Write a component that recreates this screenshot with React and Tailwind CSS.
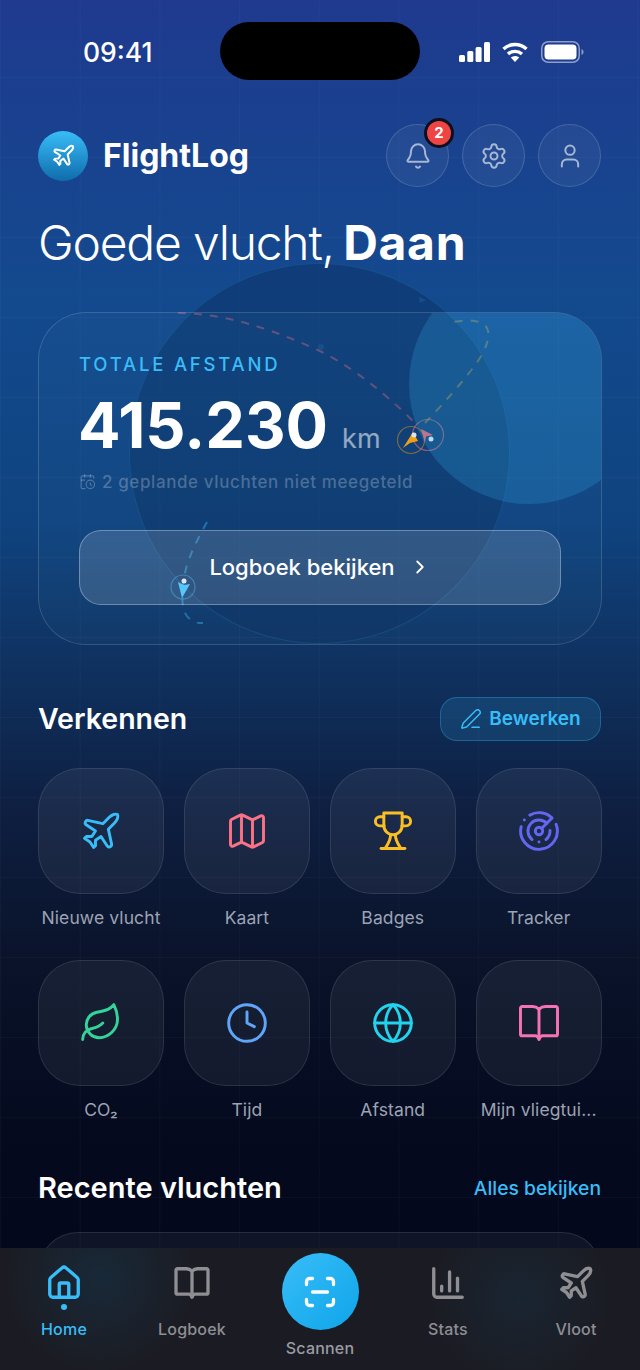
import React from 'react';
import {
  Bell, Settings, User, Plane, Map, Radar, Leaf, Clock, Globe,
  ChevronRight, PenLine, CalendarClock, House, ChartColumn, ScanLine,
} from 'lucide-react';

const FONT = "font-['Inter','Liberation_Sans',sans-serif]";

// lucide's current trophy and book differ from the picture, so these two are drawn by hand
const TrophyIcon = ({ size = 44, strokeWidth = 1.6, className }) => (
  <svg width={size} height={size} viewBox="0 0 24 24" fill="none" stroke="currentColor" strokeWidth={strokeWidth} strokeLinecap="round" strokeLinejoin="round" className={className}>
    <path d="M7 2.200h10v6.800a5 5 0 0 1-10 0z" />
    <path d="M7 4.200H4.900a2.500 2.500 0 0 0 0 5H7.200" />
    <path d="M17 4.200h2.100a2.500 2.500 0 0 1 0 5H16.800" />
    <path d="M10.700 14c0 2.500-1 4.500-2.700 7" />
    <path d="M13.300 14c0 2.500 1 4.500 2.700 7" />
    <path d="M5.500 21.500h13" />
  </svg>
);

const BookIcon = ({ size = 44, strokeWidth = 1.6, className }) => (
  <svg width={size} height={size} viewBox="0 0 24 24" fill="none" stroke="currentColor" strokeWidth={strokeWidth} strokeLinecap="round" strokeLinejoin="round" className={className}>
    <path d="M12 4.500C11 3.500 10 3 8.500 3H2.800a.9.9 0 0 0-.9.900v14.200a.9.9 0 0 0 .9.900H10c1 0 1.600.8 2 2 .4-1.200 1-2 2-2h7.200a.9.9 0 0 0 .9-.9V3.900a.9.9 0 0 0-.9-.9h-5.700C14 3 13 3.500 12 4.500z" />
    <path d="M12 4.500V20.500" />
  </svg>
);

const tiles = [
  { label: 'Nieuwe vlucht', Icon: Plane, color: 'text-[#38bdf8]' },
  { label: 'Kaart', Icon: Map, color: 'text-[#fb7185]' },
  { label: 'Badges', Icon: TrophyIcon, color: 'text-[#fbbf24]' },
  { label: 'Tracker', Icon: Radar, color: 'text-[#6366f1]' },
  { label: 'CO₂', Icon: Leaf, color: 'text-[#34d399]' },
  { label: 'Tijd', Icon: Clock, color: 'text-[#60a5fa]' },
  { label: 'Afstand', Icon: Globe, color: 'text-[#22d3ee]' },
  { label: 'Mijn vliegtui...', Icon: BookIcon, color: 'text-[#f472b6]' },
];

const navItems = [
  { label: 'Home', Icon: House, active: true },
  { label: 'Logboek', Icon: BookIcon },
  { label: 'Scannen', scan: true },
  { label: 'Stats', Icon: ChartColumn },
  { label: 'Vloot', Icon: Plane },
];

const StatusBar = () => (
  <div className="relative flex h-[102px] items-start justify-between pl-[83px] pr-[56px] pt-[37px]">
    <span className="text-[26.500px] leading-[30px] font-medium text-white">09:41</span>
    <div className="absolute left-[220px] top-[22px] h-[58px] w-[200px] rounded-full bg-black" />
    <div className="flex items-center gap-[12px] pt-[4px]">
      <svg width="31" height="20" viewBox="0 0 31 20" fill="white">
        <rect x="0" y="13" width="6" height="7" rx="1.500" />
        <rect x="8.300" y="9" width="6" height="11" rx="1.500" />
        <rect x="16.600" y="5" width="6" height="15" rx="1.500" />
        <rect x="25" y="0" width="6" height="20" rx="1.500" />
      </svg>
      <svg width="26" height="20" viewBox="0 0 26 20" fill="none" stroke="white" strokeWidth="3.400">
        <path d="M1.500 7C8 1 18 1 24.500 7" />
        <path d="M6 12C10 8.500 16 8.500 20 12" />
        <path d="M13 20L8.800 15.600C11.400 13.600 14.600 13.600 17.200 15.600Z" fill="white" stroke="none" />
      </svg>
      <svg width="43" height="22" viewBox="0 0 43 22" fill="none" className="ml-[1px]">
        <rect x="0.750" y="0.750" width="37.500" height="20.500" rx="6.500" stroke="white" strokeOpacity="0.5" strokeWidth="1.500" />
        <rect x="3.500" y="3.500" width="32" height="15" rx="4" fill="white" />
        <path d="M40.500 8v6c1.200-.5 2-1.700 2-3s-.8-2.500-2-3z" fill="white" fillOpacity="0.5" />
      </svg>
    </div>
  </div>
);

const HeaderButton = ({ Icon, badge }) => (
  <div className="relative flex h-[63px] w-[63px] items-center justify-center rounded-full border border-white/15 bg-white/[0.05]">
    <Icon size={28} strokeWidth={1.700} className="text-white/60" />
    {badge && (
      <span className="absolute right-[-6px] top-[-7px] flex h-[30px] w-[30px] items-center justify-center rounded-full border-[3px] border-[#0b0f1e] bg-[#ef4444] text-[15px] font-bold text-white">
        {badge}
      </span>
    )}
  </div>
);

// flight paths and markers drawn over the globe
const RouteArt = () => (
  <svg className="absolute left-0 top-0" width="640" height="700" viewBox="0 0 640 700" fill="none">
    <path d="M178 313C225 313 275 330 322 352C360 372 390 398 416 424" stroke="#fb7185" strokeOpacity="0.35" strokeWidth="2" strokeDasharray="8 8" />
    <path d="M425 423C445 402 472 372 483 353C490 338 492 326 479 322C468 319 458 321 449 323" stroke="#fbbf24" strokeOpacity="0.32" strokeWidth="2" strokeDasharray="8 8" />
    <path d="M207 522C197 540 188 558 185 573C182 590 182 600 183 607C185 618 194 624 203 623" stroke="#38bdf8" strokeOpacity="0.42" strokeWidth="2" strokeDasharray="8 8" />
    <circle cx="321" cy="347" r="3" fill="#38bdf8" fillOpacity="0.12" />
    <path d="M419 297l7 3-6 3z" fill="#38bdf8" fillOpacity="0.15" />
    <circle cx="411" cy="440" r="13.500" stroke="#f59e0b" strokeOpacity="0.45" strokeWidth="1.200" />
    <circle cx="428" cy="435" r="15.500" stroke="#fb7185" strokeOpacity="0.5" strokeWidth="1.200" />
    <path d="M403 448l10-16 5 9-8 2z" fill="#f59e0b" />
    <path d="M421 429l12 6-7 1.500-1 6z" fill="#e0606f" />
    <circle cx="414" cy="435" r="2.500" fill="#dbe4f0" />
    <circle cx="431" cy="439" r="2.500" fill="#dbe4f0" />
    <circle cx="183" cy="587" r="12" stroke="#38bdf8" strokeOpacity="0.4" strokeWidth="1.200" />
    <path d="M178 582l6 3 6-1-8 14z" fill="#38bdf8" />
    <circle cx="184" cy="581" r="2.500" fill="#dbe4f0" />
  </svg>
);

const Backdrop = () => (
  <div className="absolute inset-0 overflow-hidden bg-[linear-gradient(180deg,#1f3a8f_0%,#134a8e_22%,#0f437f_38%,#0f2f5c_50%,#0e1f41_59%,#0a132a_70%,#04091d_84%,#03071a_100%)]">
    <div className="absolute inset-0 bg-[linear-gradient(rgba(255,255,255,0.025)_1px,transparent_1px),linear-gradient(90deg,rgba(255,255,255,0.025)_1px,transparent_1px)] bg-[size:79.700px_80px] bg-[position:0_-3px]" />
    <div className="absolute left-[129px] top-[263px] h-[381px] w-[381px] rounded-full border border-[#38bdf8]/15 bg-[#0a2f60]/45" />
    <RouteArt />
  </div>
);

const HeroCard = () => (
  <div className="relative mt-[41px] flex h-[333px] flex-col overflow-hidden rounded-[48px] border border-white/15 bg-[#7dd3fc]/[0.03] px-[40px] pt-[39px]">
    <div className="absolute right-[-48px] top-[-49px] h-[240px] w-[240px] rounded-full bg-[#38bdf8]/20" />
    <div className="relative text-[18.500px] leading-[24px] font-medium tracking-[2.800px] text-[#38bdf8]">TOTALE AFSTAND</div>
    <div className="relative ml-[-1px] mt-[15px] flex items-baseline">
      <span className="text-[63px] leading-[68px] font-bold text-white">415.230</span>
      <span className="ml-[14px] text-[27px] font-normal text-white/55">km</span>
    </div>
    <div className="relative mt-[11px] flex items-center gap-[6px] text-[17px] leading-[22px] font-medium tracking-[0.6px] text-white/25">
      <CalendarClock size={17} strokeWidth={1.600} />
      <span>2 geplande vluchten niet meegeteld</span>
    </div>
    <div className="relative mt-[37px] flex h-[75px] items-center justify-center gap-[14px] rounded-[22px] border border-white/30 bg-white/[0.14] text-[22px] font-medium text-white">
      <span>Logboek bekijken</span>
      <ChevronRight size={22} strokeWidth={2} />
    </div>
  </div>
);

const Tile = ({ label, Icon, color }) => (
  <div className="flex w-[126px] flex-col items-center">
    <div className="flex h-[126px] w-[126px] items-center justify-center rounded-[42px] border border-white/10 bg-white/[0.055]">
      <Icon size={44} strokeWidth={1.600} className={color} />
    </div>
    <div className="mt-[13px] text-[17.500px] leading-[22px] font-normal tracking-[0.1px] whitespace-nowrap text-[#9ca3b4]">{label}</div>
  </div>
);

const BottomNav = () => (
  <div className="absolute bottom-0 left-0 right-0 flex h-[122px] bg-[#1b1c23] bg-[radial-gradient(circle_at_100px_30px,rgba(14,90,140,0.2),transparent_95px),radial-gradient(circle_at_520px_50px,rgba(14,90,140,0.14),transparent_90px)]">
    {navItems.map(({ label, Icon, active, scan }) =>
      scan ? (
        <div key={label} className="flex w-[128px] flex-col items-center pt-[5px]">
          <div className="flex h-[77px] w-[77px] items-center justify-center rounded-full bg-[linear-gradient(135deg,#38bdf8,#0ea5e9)]">
            <ScanLine size={36} strokeWidth={2.200} className="text-white" />
          </div>
          <span className="mt-[8px] text-[16px] leading-[20px] font-medium tracking-[0.2px] text-[#9a9ba3]">{label}</span>
        </div>
      ) : (
        <div key={label} className="relative flex w-[128px] flex-col items-center pt-[16px]">
          <Icon size={38} strokeWidth={2.100} className={active ? 'text-[#38bdf8]' : 'text-[#8e8e93]'} />
          {active && <span className="mt-[2px] h-[6px] w-[6px] rounded-full bg-[#38bdf8]" />}
          <span className={`absolute top-[71px] text-[16px] leading-[20px] font-medium tracking-[0.2px] ${active ? 'text-[#38bdf8]' : 'text-[#8e8e93]'}`}>{label}</span>
        </div>
      )
    )}
  </div>
);

export default function App() {
  return (
    <div className={`relative h-[1370px] w-[640px] overflow-hidden ${FONT}`}>
      <Backdrop />
      <div className="relative">
        <StatusBar />
        <div className="px-[38px]">
          <div className="mt-[22px] flex h-[63px] items-center justify-between">
            <div className="flex items-center gap-[15px]">
              <div className="flex h-[50px] w-[50px] items-center justify-center rounded-full bg-[linear-gradient(180deg,#38bdf8,#0f6cab)]">
                <Plane size={25} strokeWidth={1.900} className="text-white" />
              </div>
              <span className="text-[32px] font-bold text-white">FlightLog</span>
            </div>
            <div className="mr-[1px] flex gap-[13px]">
              <HeaderButton Icon={Bell} badge="2" />
              <HeaderButton Icon={Settings} />
              <HeaderButton Icon={User} />
            </div>
          </div>
          <h1 className="mt-[28px] text-[48px] leading-[56px] font-light tracking-[-1.200px] text-white">
            Goede vlucht, <span className="ml-[-3px] font-bold tracking-[0.7px]">Daan</span>
          </h1>
          <HeroCard />
          <div className="mt-[52px] flex h-[44px] items-center justify-between">
            <span className="text-[28.500px] font-semibold text-white">Verkennen</span>
            <div className="mr-[1px] flex h-[44px] w-[161px] items-center justify-center gap-[7px] rounded-[17px] border border-[#38bdf8]/30 bg-[#38bdf8]/15 text-[19px] font-semibold text-[#38bdf8]">
              <PenLine size={22} strokeWidth={1.600} />
              <span>Bewerken</span>
            </div>
          </div>
          <div className="mt-[27px] grid grid-cols-4 gap-x-[19.500px] gap-y-[31px]">
            {tiles.map((t) => <Tile key={t.label} {...t} />)}
          </div>
          <div className="mt-[47px] flex h-[40px] items-center justify-between">
            <span className="text-[29px] font-semibold text-white">Recente vluchten</span>
            <span className="mr-[1px] text-[19.300px] font-medium text-[#38bdf8]">Alles bekijken</span>
          </div>
          <div className="mt-[24px] h-[100px] rounded-[40px] border border-white/10 bg-white/[0.05]" />
        </div>
      </div>
      <BottomNav />
    </div>
  );
}
